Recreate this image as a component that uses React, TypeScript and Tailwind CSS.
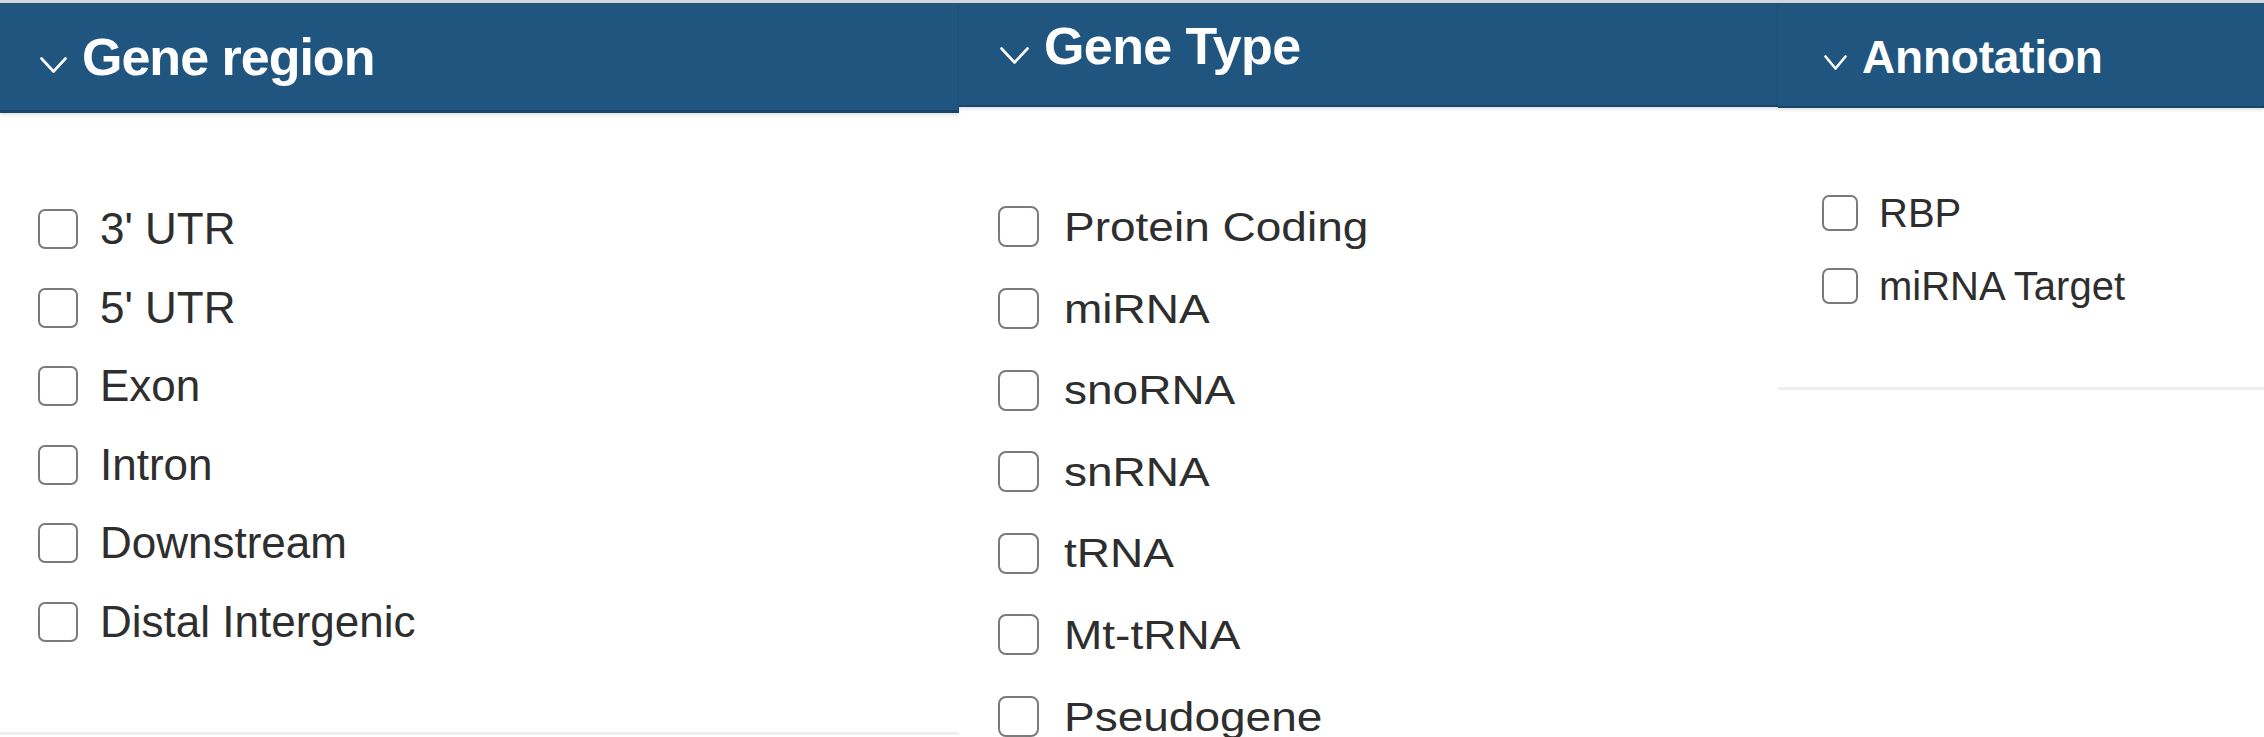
import React from "react";

const Chevron = ({ w, h }: { w: number; h: number }) => (
  <svg width={w} height={h} viewBox={`0 0 ${w} ${h}`} className="shrink-0">
    <polyline
      points={`1.5,1.5 ${w / 2},${h - 1.5} ${w - 1.5},1.5`}
      fill="none"
      stroke="white"
      strokeWidth="2.6"
      strokeLinecap="round"
      strokeLinejoin="round"
    />
  </svg>
);

const regions = ["3' UTR", "5' UTR", "Exon", "Intron", "Downstream", "Distal Intergenic"];
const types = ["Protein Coding", "miRNA", "snoRNA", "snRNA", "tRNA", "Mt-tRNA", "Pseudogene"];
const annotations = ["RBP", "miRNA Target"];

export default function App() {
  return (
    <div
      className="w-[2264px] h-[737px] overflow-hidden bg-white flex flex-col"
      style={{ fontFamily: '"Liberation Sans", Arial, Helvetica, sans-serif' }}
    >
      <div className="h-[3px] w-full bg-[#d3d7db] shrink-0" />
      <div className="flex flex-row flex-1 min-h-0">
        {/* Panel 1 */}
        <div className="w-[959px] shrink-0 flex flex-col">
          <div className="h-[110px] bg-[#1f557f] border-b-[3px] border-[#184669] shadow-[0_2px_3px_rgba(0,0,0,0.12)] flex flex-row items-start pt-[28px] pl-[40px] gap-[15px] relative z-10">
            <div className="mt-[26px]">
              <Chevron w={27} h={16} />
            </div>
            <span className="text-white font-bold text-[52px] leading-none tracking-[-1px] whitespace-nowrap">
              Gene region
            </span>
          </div>
          <div className="h-[622px] border-b-[3px] border-[#efefef] pt-[96px] pl-[38px] flex flex-col gap-[38.6px]">
            {regions.map((r) => (
              <div key={r} className="flex flex-row items-center h-[40px] gap-[22px]">
                <div className="w-[40px] h-[40px] shrink-0 rounded-[7px] border-[2.5px] border-[#7b7b7b] bg-white" />
                <span className="text-[44px] leading-none text-[#2e2e2e] whitespace-nowrap">{r}</span>
              </div>
            ))}
          </div>
        </div>

        {/* Panel 2 */}
        <div className="w-[819px] shrink-0 flex flex-col">
          <div className="h-[105px] bg-[#1f557f] border-b-[2px] border-[#184669] shadow-[0_2px_3px_rgba(0,0,0,0.12)] flex flex-row items-start pt-[17px] pl-[41px] gap-[15px] relative z-10">
            <div className="mt-[27px]">
              <Chevron w={29} h={17} />
            </div>
            <span className="text-white font-bold text-[52px] leading-none tracking-[-0.6px] whitespace-nowrap">
              Gene Type
            </span>
          </div>
          <div className="pt-[99px] pl-[39px] flex flex-col gap-[40.6px]">
            {types.map((t) => (
              <div key={t} className="flex flex-row items-center h-[41px] gap-[25px]">
                <div className="w-[41px] h-[41px] shrink-0 rounded-[8px] border-[2.5px] border-[#7b7b7b] bg-white" />
                <span className="inline-block origin-left scale-x-[1.15] text-[40px] leading-none text-[#2e2e2e] whitespace-nowrap">
                  {t}
                </span>
              </div>
            ))}
          </div>
        </div>

        {/* Panel 3 */}
        <div className="flex-1 flex flex-col">
          <div className="h-[105px] bg-[#1f557f] border-b-[2px] border-[#184669] shadow-[0_2px_3px_rgba(0,0,0,0.12)] flex flex-row items-start pt-[31px] pl-[46px] gap-[15px] relative z-10">
            <div className="mt-[21px]">
              <Chevron w={23} h={15} />
            </div>
            <span className="text-white font-bold text-[46px] leading-none tracking-[-0.2px] whitespace-nowrap">
              Annotation
            </span>
          </div>
          <div className="h-[282px] border-b-[3px] border-[#efefef] pt-[87px] pl-[44px] flex flex-col gap-[37px]">
            {annotations.map((a) => (
              <div key={a} className="flex flex-row items-center h-[36px] gap-[21px]">
                <div className="w-[36px] h-[36px] shrink-0 rounded-[7px] border-[2.5px] border-[#7b7b7b] bg-white" />
                <span className="text-[40px] leading-none text-[#2e2e2e] whitespace-nowrap">{a}</span>
              </div>
            ))}
          </div>
        </div>
      </div>
    </div>
  );
}
